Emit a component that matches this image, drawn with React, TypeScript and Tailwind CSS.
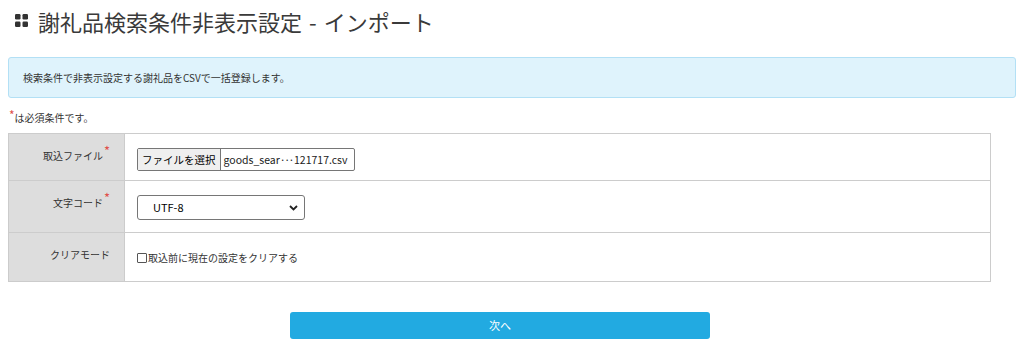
import React from "react";

const font = { fontFamily: '"Noto Sans CJK JP", "Noto Sans", sans-serif' };

function GridIcon() {
  return (
    <svg width="13" height="13" viewBox="0 0 13 13" className="shrink-0">
      <rect x="0" y="0" width="5.5" height="5.5" rx="1.2" fill="#333" />
      <rect x="7.5" y="0" width="5.5" height="5.5" rx="1.2" fill="#333" />
      <rect x="0" y="7.5" width="5.5" height="5.5" rx="1.2" fill="#333" />
      <rect x="7.5" y="7.5" width="5.5" height="5.5" rx="1.2" fill="#333" />
    </svg>
  );
}

function Req() {
  return <span className="text-[#e0504a] text-[13px] leading-none relative -top-[4px] ml-[1px]">*</span>;
}

export default function App() {
  return (
    <div className="w-[1024px] h-[351px] bg-white text-[#333] overflow-hidden" style={font}>
      <div className="flex items-center h-[40px] pl-[15px] pt-[1px]">
        <GridIcon />
        <h1 className="ml-[10px] text-[22px] leading-none text-[#3a3a3a] font-normal whitespace-nowrap">
          謝礼品検索条件非表示設定<span className="mx-[7px]">-</span>インポート
        </h1>
      </div>

      <div className="ml-[8px] mt-[17px] w-[1008px] h-[41px] rounded-[3px] border border-[#b3e0f5] bg-[#dff3fc] flex items-center pl-[14px] text-[10px] text-[#333]">
        検索条件で非表示設定する謝礼品をCSVで一括登録します。
      </div>

      <div className="ml-[9px] mt-[12px] text-[10px] h-[14px] flex items-center">
        <span className="text-[#e0504a] text-[12px] relative -top-[2px]">*</span>
        <span>は必須条件です。</span>
      </div>

      <div className="ml-[8px] mt-[9px] w-[983px] border border-[#cccccc] text-[10px]">
        <div className="flex h-[47px] border-b border-[#cccccc]">
          <div className="w-[116px] bg-[#dddddd] border-r border-[#cccccc] flex justify-end pr-[14px] pt-[14px]">
            <span>取込ファイル<Req /></span>
          </div>
          <div className="flex-1 pl-[12px] pt-[14px]">
            <div className="flex h-[23px] w-[218px] border border-[#767676] rounded-[2px] bg-white items-stretch whitespace-nowrap overflow-hidden">
              <div className="flex items-center px-[4px] bg-[#efefef] border-r border-[#767676] text-[10.5px] text-black whitespace-nowrap">
                ファイルを選択
              </div>
              <div className="flex items-center pl-[3px] text-[10.5px] text-[#222] whitespace-nowrap">
                goods_sear<span className="tracking-[-1.5px] mr-[1px]">···</span>121717.csv
              </div>
            </div>
          </div>
        </div>
        <div className="flex h-[52px] border-b border-[#cccccc]">
          <div className="w-[116px] bg-[#dddddd] border-r border-[#cccccc] flex justify-end pr-[14px] pt-[14px]">
            <span>文字コード<Req /></span>
          </div>
          <div className="flex-1 pl-[12px] pt-[14px]">
            <div className="flex h-[25px] w-[168px] border border-[#767676] rounded-[3px] bg-white items-center justify-between pl-[15px] pr-[6px] text-[11px] text-black">
              <span>UTF-8</span>
              <svg width="9" height="6" viewBox="0 0 9 6">
                <path d="M1 1 L4.5 4.5 L8 1" fill="none" stroke="#222" strokeWidth="1.8" />
              </svg>
            </div>
          </div>
        </div>
        <div className="flex h-[48px]">
          <div className="w-[116px] bg-[#dddddd] border-r border-[#cccccc] flex justify-end pr-[14px] pt-[14px]">
            <span>クリアモード</span>
          </div>
          <div className="flex-1 pl-[12px] pt-[17px] flex items-start">
            <div className="flex items-center">
              <span className="inline-block w-[10px] h-[10px] border border-[#555] rounded-[1px] bg-white mr-[1px]" />
              <span>取込前に現在の設定をクリアする</span>
            </div>
          </div>
        </div>
      </div>

      <div className="flex mt-[30px] pl-[290px]">
        <button className="w-[420px] h-[27px] rounded-[3px] bg-[#22aae1] text-white text-[11px] flex items-center justify-center">
          次へ
        </button>
      </div>
    </div>
  );
}
